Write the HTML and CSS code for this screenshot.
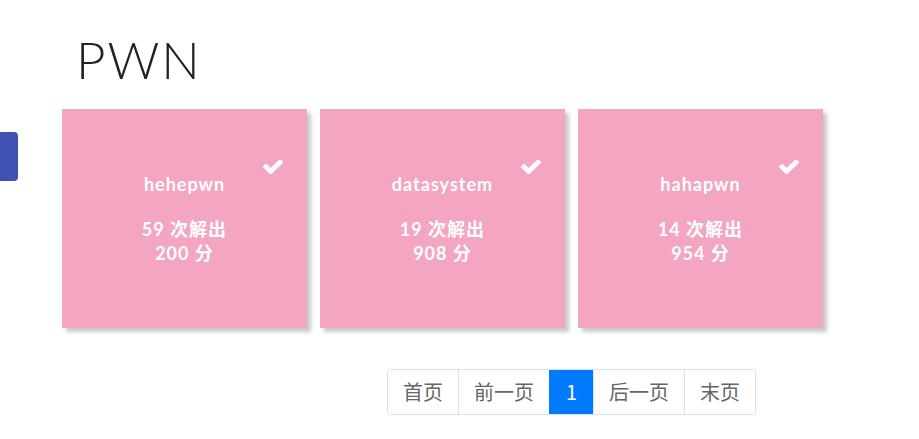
FILE: index.html
```html
<!DOCTYPE html>
<html lang="zh">
<head>
<meta charset="utf-8">
<link rel="stylesheet" href="styles.css">
</head>
<body>
<div class="side-tab"></div>
<main class="page">
  <h1 class="title">PWN</h1>
  <div class="cards">
    <div class="card">
      <svg class="check" viewBox="121 380 1550 1110" width="20" height="14" preserveAspectRatio="none"><path fill="#fff" d="M1671 566q0 40-28 68l-724 724-136 136q-28 28-68 28t-68-28l-136-136-362-362q-28-28-28-68t28-68l136-136q28-28 68-28t68 28l294 295 656-657q28-28 68-28t68 28l136 136q28 28 28 68z"/></svg>
      <div class="name">hehepwn</div>
      <div class="stat">59 次解出</div>
      <div class="stat">200 分</div>
    </div>
    <div class="card">
      <svg class="check" viewBox="121 380 1550 1110" width="20" height="14" preserveAspectRatio="none"><path fill="#fff" d="M1671 566q0 40-28 68l-724 724-136 136q-28 28-68 28t-68-28l-136-136-362-362q-28-28-28-68t28-68l136-136q28-28 68-28t68 28l294 295 656-657q28-28 68-28t68 28l136 136q28 28 28 68z"/></svg>
      <div class="name">datasystem</div>
      <div class="stat">19 次解出</div>
      <div class="stat">908 分</div>
    </div>
    <div class="card">
      <svg class="check" viewBox="121 380 1550 1110" width="20" height="14" preserveAspectRatio="none"><path fill="#fff" d="M1671 566q0 40-28 68l-724 724-136 136q-28 28-68 28t-68-28l-136-136-362-362q-28-28-28-68t28-68l136-136q28-28 68-28t68 28l294 295 656-657q28-28 68-28t68 28l136 136q28 28 28 68z"/></svg>
      <div class="name">hahapwn</div>
      <div class="stat">14 次解出</div>
      <div class="stat">954 分</div>
    </div>
  </div>
  <nav class="pager">
    <a class="pg">首页</a>
    <a class="pg">前一页</a>
    <a class="pg active">1</a>
    <a class="pg">后一页</a>
    <a class="pg">末页</a>
  </nav>
</main>
</body>
</html>
```
FILE: styles.css
```css
html, body {
  margin: 0;
  padding: 0;
  background: #fff;
}
body {
  font-family: Lato, "Noto Sans CJK SC", sans-serif;
  position: relative;
  width: 919px;
  height: 439px;
  overflow: hidden;
}
.side-tab {
  position: absolute;
  left: 0;
  top: 132px;
  width: 18px;
  height: 49px;
  background: #3f51b5;
  border-radius: 0 4px 4px 0;
}
.page {
  padding: 30px 0 0 62px;
}
.title {
  margin: 0 0 19px 14px;
  font-family: Lato, sans-serif;
  font-weight: 300;
  font-size: 51px;
  line-height: 60px;
  letter-spacing: 2px;
  color: #222;
}
.cards {
  display: flex;
  gap: 13px;
}
.card {
  position: relative;
  width: 245px;
  height: 219px;
  background: #f4a5c1;
  box-shadow: 4px 4px 4px rgba(0, 0, 0, 0.22);
  display: flex;
  flex-direction: column;
  align-items: center;
  justify-content: center;
  color: #fff;
  font-weight: 700;
  font-size: 18px;
  line-height: 24px;
  letter-spacing: 1px;
}
.check {
  position: absolute;
  top: 51px;
  right: 24px;
}
.name {
  margin-bottom: 21px;
}
.pager {
  display: flex;
  margin: 41px 0 0 325px;
  width: max-content;
  border: 1px solid #dee2e6;
  border-radius: 4px;
}
.pg {
  padding: 7px 15px;
  font-size: 20px;
  line-height: 30px;
  color: #666;
  font-family: "Noto Sans CJK SC", sans-serif;
  border-left: 1px solid #dee2e6;
}
.pg:first-child {
  border-left: none;
}
.pg.active {
  background: #007bff;
  color: #fff;
  border-left-color: #007bff;
  padding: 7px 16px;
}
```
